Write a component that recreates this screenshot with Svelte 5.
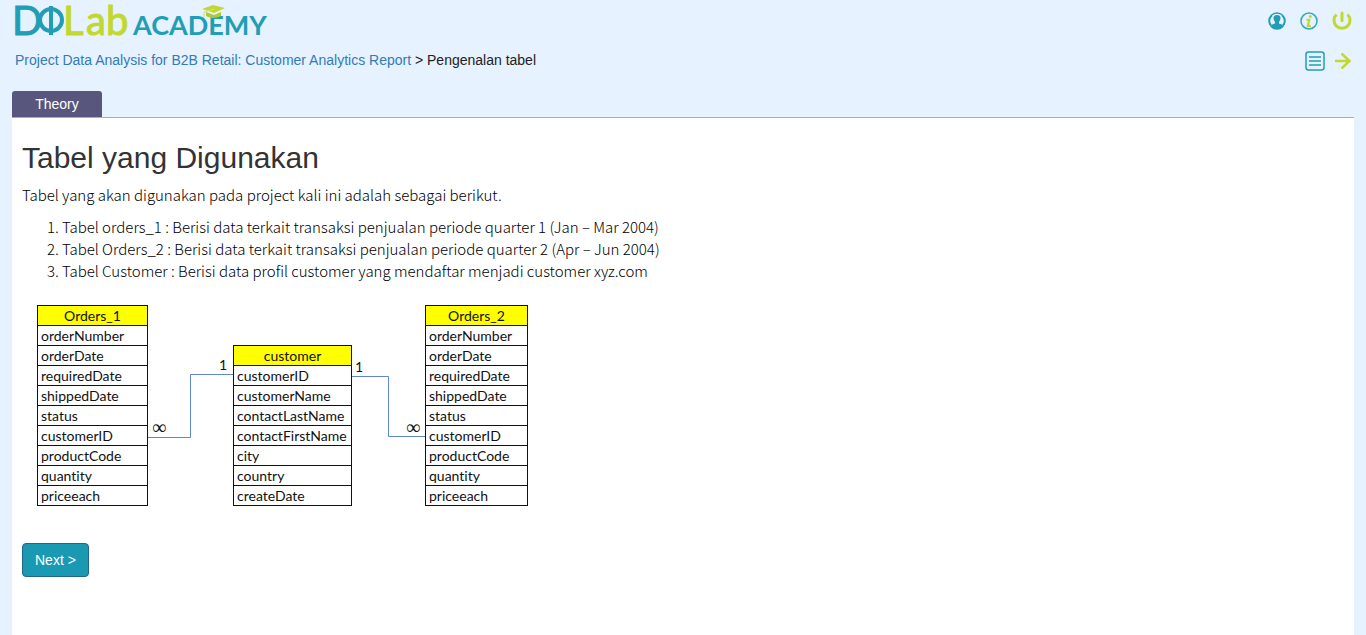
<script>
  const orderColumns = [
    'orderNumber', 'orderDate', 'requiredDate', 'shippedDate', 'status',
    'customerID', 'productCode', 'quantity', 'priceeach'
  ];
  const customerColumns = [
    'customerID', 'customerName', 'contactLastName', 'contactFirstName',
    'city', 'country', 'createDate'
  ];
  const notes = [
    'Tabel orders_1 : Berisi data terkait transaksi penjualan periode quarter 1 (Jan – Mar 2004)',
    'Tabel Orders_2 : Berisi data terkait transaksi penjualan periode quarter 2 (Apr – Jun 2004)',
    'Tabel Customer : Berisi data profil customer yang mendaftar menjadi customer xyz.com'
  ];
</script>

{#snippet entity(name, columns, size)}
  <table class={size}>
    <thead><tr><th scope="col">{name}</th></tr></thead>
    <tbody>
      {#each columns as column}
        <tr><td>{column}</td></tr>
      {/each}
    </tbody>
  </table>
{/snippet}

<header>
  <div class="bar">
    <a class="logo" href="#home" aria-label="DQLab Academy">
      <svg width="256" height="42" viewBox="0 0 256 42">
        <g class="lab">
          <text class="teal" x="-3" y="35">D</text>
          <text class="lime" x="48" y="35">L</text>
          <text class="lime" x="71" y="35">ab</text>
        </g>
        <g fill="none" stroke="#219eb5" stroke-width="4">
          <ellipse cx="36" cy="20" rx="11" ry="11" />
          <path d="M36 6V35" />
        </g>
        <text class="academy" x="118" y="35">ACADEMY</text>
        <path d="M187 9L198 5L210 8L199 13Z" fill="#c1d82f" />
        <path d="M191 12L199 15L206 12V16Q198 20 191 16Z" fill="#b2c935" />
        <path d="M199 9L189 12V18" fill="none" stroke="#d5e26b" />
      </svg>
    </a>
    <nav class="icons top">
      <a href="#profile" aria-label="Profile">
        <svg width="18" height="18" viewBox="0 0 18 18">
          <circle cx="9" cy="9" r="8" fill="#e6f2ff" stroke="#219eb5" stroke-width="1.4" />
          <path d="M3 14.500Q3.500 12 7 11.500V10Q5.500 8.500 5.500 6Q5.500 3 9 3Q12.500 3 12.500 6Q12.500 8.500 11 10V11.500Q14.500 12 15 14.500Q12.500 17 9 17Q5.500 17 3 14.500Z" fill="#219eb5" />
          <path d="M4 3.500Q1 6 1.500 10Q2 12.500 3.500 13.500M14 3.500Q17 6 16.500 10Q16 12.500 14.500 13.500" fill="none" stroke="#219eb5" stroke-width="1.5" />
        </svg>
      </a>
      <a href="#info" aria-label="Information">
        <svg width="18" height="18" viewBox="0 0 18 18">
          <circle cx="9" cy="9" r="8" fill="none" stroke="#3ba9bd" stroke-width="1.6" />
          <circle cx="10.300" cy="4.500" r="1.500" fill="#c1d82f" />
          <path d="M6.500 7.800H9.300L7.900 13.800H10.800" fill="none" stroke="#c1d82f" stroke-width="2.2" />
        </svg>
      </a>
      <a href="#logout" aria-label="Log out">
        <svg width="20" height="20" viewBox="0 0 20 20" fill="none" stroke="#c1d82f" stroke-width="3">
          <path d="M4.500 3.500A8 8 0 1 0 15.500 3.500" />
          <path d="M10 2V9.500" stroke-linecap="round" />
        </svg>
      </a>
    </nav>
  </div>
  <div class="bar second">
    <nav class="crumbs" aria-label="Breadcrumb">
      <a href="#course">Project Data Analysis for B2B Retail: Customer Analytics Report</a>
      &gt; Pengenalan tabel
    </nav>
    <nav class="icons">
      <a href="#contents" aria-label="Contents">
        <svg width="20" height="20" viewBox="0 0 20 20" fill="none" stroke="#219eb5">
          <rect x="1" y="1" width="18" height="18" rx="2.500" stroke-width="1.500" />
          <path d="M4 6H16M4 10H16M4 14H16" stroke-width="1.300" />
        </svg>
      </a>
      <a href="#next" aria-label="Next lesson">
        <svg width="18" height="18" viewBox="0 0 18 18" fill="none" stroke="#c1d82f" stroke-width="2.500">
          <path d="M1 9H16M7.500 1.500L15.500 9L7.500 16.500" />
        </svg>
      </a>
    </nav>
  </div>
</header>

<main>
  <div class="tabs"><button class="tab" type="button">Theory</button></div>
  <article>
    <h1>Tabel yang Digunakan</h1>
    <p>Tabel yang akan digunakan pada project kali ini adalah sebagai berikut.</p>
    <ol>
      {#each notes as note}
        <li>{note}</li>
      {/each}
    </ol>
    <div class="diagram">
      {@render entity('Orders_1', orderColumns, 'first')}
      <svg width="85" height="201" viewBox="0 0 85 201">
        <path class="link" d="M0 132.500H42.500V69.500H85" />
        <text x="71" y="65">1</text>
        <text class="many" x="4" y="129">∞</text>
      </svg>
      {@render entity('customer', customerColumns, 'middle')}
      <svg width="73" height="201" viewBox="0 0 73 201">
        <path class="link" d="M0 71.500H36.500V131.500H73" />
        <text x="3" y="67">1</text>
        <text class="many" x="54" y="129">∞</text>
      </svg>
      {@render entity('Orders_2', orderColumns, 'last')}
    </div>
    <button class="next" type="button">Next &gt;</button>
  </article>
</main>

<style>
  :global(body) {
    margin: 0;
    background: #e6f2ff;
    color: #333;
    font-family: "Liberation Sans", Arial, sans-serif;
    font-size: 14px;
  }
  :global(#app) {
    display: flex;
    flex-direction: column;
    min-height: 100vh;
  }
  a {
    color: #337ab7;
    text-decoration: none;
  }
  svg {
    display: block;
  }
  header {
    padding: 0 14px 0 15px;
  }
  .bar {
    display: flex;
    justify-content: space-between;
    align-items: center;
    height: 42px;
  }
  .second {
    height: 37px;
  }
  .icons {
    display: flex;
    align-items: center;
    gap: 9px;
  }
  .top {
    gap: 14px;
  }
  .crumbs {
    color: #222;
    line-height: 20px;
    padding-bottom: 2px;
  }
  .logo svg {
    overflow: visible;
  }
  .lab {
    font: 40px Lato, sans-serif;
  }
  .teal {
    fill: #219eb5;
    stroke: #219eb5;
  }
  .lime {
    fill: #c1d82f;
    stroke: #c1d82f;
  }
  .academy {
    font: bold 27px Lato, sans-serif;
    fill: #219eb5;
  }
  main {
    flex: 1;
    display: flex;
    flex-direction: column;
    margin: 12px 12px 0;
  }
  .tabs {
    display: flex;
    border-bottom: 1px solid #aaaac6;
  }
  .tab {
    width: 90px;
    height: 26px;
    padding: 0;
    border: 0;
    border-radius: 3px 3px 0 0;
    background: #58567d;
    color: #fff;
    font: 14px "Liberation Sans", Arial, sans-serif;
  }
  article {
    flex: 1;
    padding: 22px 10px;
    background: #fff;
  }
  h1 {
    margin: 0 0 8px;
    font-size: 30px;
    font-weight: 400;
    line-height: 36px;
  }
  p,
  ol {
    margin: 0 0 10px;
    color: #000;
    font: 300 15px/22px "Noto Sans CJK SC", sans-serif;
  }
  ol {
    padding-left: 40px;
  }
  .diagram {
    display: flex;
    align-items: flex-end;
    margin: 23px 0 37px 15px;
    color: #111;
    font: 14px Lato, sans-serif;
    font-variant-ligatures: none;
  }
  .diagram svg text {
    font: 14px Lato, sans-serif;
    fill: #111;
  }
  .diagram svg .many {
    font: 20px "Liberation Serif", serif;
  }
  .link {
    fill: none;
    stroke: #6088cc;
  }
  table {
    border-collapse: collapse;
    table-layout: fixed;
  }
  .first {
    width: 111px;
  }
  .middle {
    width: 119px;
  }
  .last {
    width: 103px;
  }
  th,
  td {
    height: 19px;
    padding: 0 3px;
    border: 1px solid #111;
    line-height: 19px;
    white-space: nowrap;
  }
  th {
    background: #ff0;
    font-weight: 400;
  }
  .next {
    height: 34px;
    padding: 0 12px;
    border: 1px solid #23658a;
    border-radius: 4px;
    background: #1a99b3;
    color: #fff;
    font: 14px "Liberation Sans", Arial, sans-serif;
  }
</style>
